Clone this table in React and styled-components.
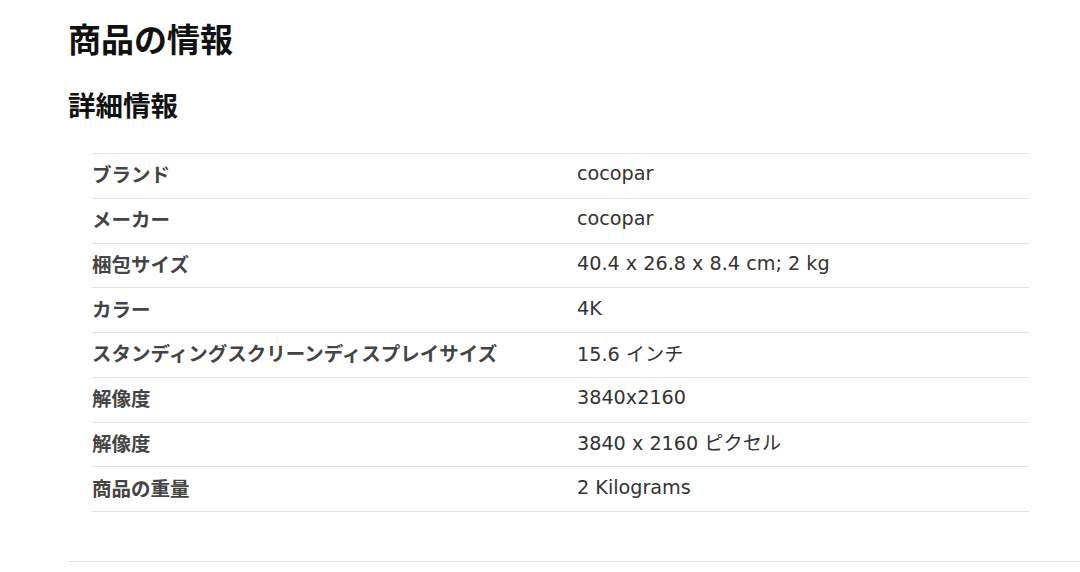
import React from 'react'
import styled, { createGlobalStyle } from 'styled-components'

const GlobalStyle = createGlobalStyle`
  body {
    margin: 0;
    background: #fff;
    font-family: "Noto Sans", "Noto Sans CJK JP", sans-serif;
  }
`;

const details = [
  ['ブランド', 'cocopar'],
  ['メーカー', 'cocopar'],
  ['梱包サイズ', '40.4 x 26.8 x 8.4 cm; 2 kg'],
  ['カラー', '4K'],
  ['スタンディングスクリーンディスプレイサイズ', '15.6 インチ'],
  ['解像度', '3840x2160'],
  ['解像度', '3840 x 2160 ピクセル'],
  ['商品の重量', '2 Kilograms'],
]

const App = () => {
  return (
    <Page>
      <GlobalStyle />
      <Title>商品の情報</Title>
      <SubTitle>詳細情報</SubTitle>
      <Table>
        {details.map(([label, value], i) => (
          <Row key={i}>
            <Label>{label}</Label>
            <Value>{value}</Value>
          </Row>
        ))}
      </Table>
      <Divider />
    </Page>
  )
}

const Page = styled.main`
  padding: 20px 0 0 68px;
  height: 572px;
  box-sizing: border-box;
  overflow: hidden;
`;

const Title = styled.h1`
  margin: 0;
  font-size: 33px;
  line-height: 40px;
  font-weight: 700;
  color: #111;
`;

const SubTitle = styled.h2`
  margin: 29px 0 0;
  font-size: 27.5px;
  line-height: 34px;
  font-weight: 700;
  color: #111;
`;

const Table = styled.div`
  margin: 30px 0 0 24px;
  width: 937px;
  border-top: 1px solid #e3e3e3;
`;

const Row = styled.div`
  display: grid;
  grid-template-columns: 485px 1fr;
  align-items: center;
  height: 44.75px;
  padding-bottom: 4px;
  box-sizing: border-box;
  border-bottom: 1px solid #e3e3e3;
`;

const Label = styled.div`
  font-size: 19.5px;
  font-weight: 700;
  color: #444;
  white-space: nowrap;
`;

const Value = styled.div`
  font-family: "DejaVu Sans", "Noto Sans CJK JP", sans-serif;
  font-size: 19.2px;
  font-weight: 400;
  color: #333;
  white-space: nowrap;
`;

const Divider = styled.hr`
  margin: 49px 0 0;
  border: 0;
  border-top: 1px solid #e0e0e0;
  height: 0;
`;

export default App
